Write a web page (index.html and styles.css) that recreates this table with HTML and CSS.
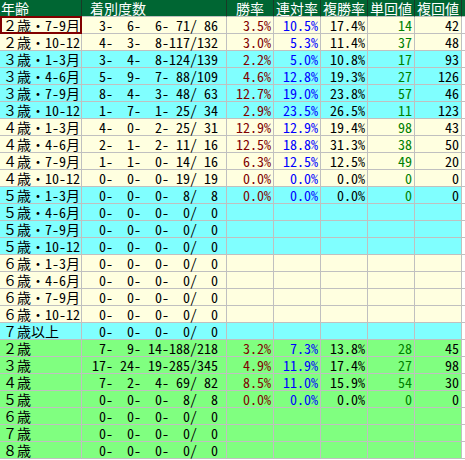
FILE: index.html
```html
<!DOCTYPE html>
<html lang="ja">
<head>
<meta charset="utf-8">
<title>年齢別成績</title>
<link rel="stylesheet" href="styles.css">
</head>
<body>
<table class="stats">
  <thead>
    <tr>
      <th class="c-age">年齢</th>
      <th class="c-rec">着別度数</th>
      <th>勝率</th>
      <th>連対率</th>
      <th>複勝率</th>
      <th>単回値</th>
      <th>複回値</th>
      <th class="c-extra"></th>
    </tr>
  </thead>
  <tbody>
    <tr class="y"><td class="age sel">２歳・7-9月</td><td class="rec">  3-  6-  6- 71/ 86</td><td class="win">3.5%</td><td class="ren">10.5%</td><td class="fuku">17.4%</td><td class="tan">14</td><td class="fk">42</td><td class="ex"></td></tr>
    <tr class="y"><td class="age">２歳・10-12</td><td class="rec">  4-  3-  8-117/132</td><td class="win">3.0%</td><td class="ren">5.3%</td><td class="fuku">11.4%</td><td class="tan">37</td><td class="fk">48</td><td class="ex"></td></tr>
    <tr class="c"><td class="age">３歳・1-3月</td><td class="rec">  3-  4-  8-124/139</td><td class="win">2.2%</td><td class="ren">5.0%</td><td class="fuku">10.8%</td><td class="tan">17</td><td class="fk">93</td><td class="ex"></td></tr>
    <tr class="c"><td class="age">３歳・4-6月</td><td class="rec">  5-  9-  7- 88/109</td><td class="win">4.6%</td><td class="ren">12.8%</td><td class="fuku">19.3%</td><td class="tan">27</td><td class="fk">126</td><td class="ex"></td></tr>
    <tr class="c"><td class="age">３歳・7-9月</td><td class="rec">  8-  4-  3- 48/ 63</td><td class="win">12.7%</td><td class="ren">19.0%</td><td class="fuku">23.8%</td><td class="tan">57</td><td class="fk">46</td><td class="ex"></td></tr>
    <tr class="c"><td class="age">３歳・10-12</td><td class="rec">  1-  7-  1- 25/ 34</td><td class="win">2.9%</td><td class="ren">23.5%</td><td class="fuku">26.5%</td><td class="tan">11</td><td class="fk">123</td><td class="ex"></td></tr>
    <tr class="y"><td class="age">４歳・1-3月</td><td class="rec">  4-  0-  2- 25/ 31</td><td class="win">12.9%</td><td class="ren">12.9%</td><td class="fuku">19.4%</td><td class="tan">98</td><td class="fk">43</td><td class="ex"></td></tr>
    <tr class="y"><td class="age">４歳・4-6月</td><td class="rec">  2-  1-  2- 11/ 16</td><td class="win">12.5%</td><td class="ren">18.8%</td><td class="fuku">31.3%</td><td class="tan">38</td><td class="fk">50</td><td class="ex"></td></tr>
    <tr class="y"><td class="age">４歳・7-9月</td><td class="rec">  1-  1-  0- 14/ 16</td><td class="win">6.3%</td><td class="ren">12.5%</td><td class="fuku">12.5%</td><td class="tan">49</td><td class="fk">20</td><td class="ex"></td></tr>
    <tr class="y"><td class="age">４歳・10-12</td><td class="rec">  0-  0-  0- 19/ 19</td><td class="win">0.0%</td><td class="ren">0.0%</td><td class="fuku">0.0%</td><td class="tan">0</td><td class="fk">0</td><td class="ex"></td></tr>
    <tr class="c"><td class="age">５歳・1-3月</td><td class="rec">  0-  0-  0-  8/  8</td><td class="win">0.0%</td><td class="ren">0.0%</td><td class="fuku">0.0%</td><td class="tan">0</td><td class="fk">0</td><td class="ex"></td></tr>
    <tr class="c"><td class="age">５歳・4-6月</td><td class="rec">  0-  0-  0-  0/  0</td><td></td><td></td><td></td><td></td><td></td><td class="ex"></td></tr>
    <tr class="c"><td class="age">５歳・7-9月</td><td class="rec">  0-  0-  0-  0/  0</td><td></td><td></td><td></td><td></td><td></td><td class="ex"></td></tr>
    <tr class="c"><td class="age">５歳・10-12</td><td class="rec">  0-  0-  0-  0/  0</td><td></td><td></td><td></td><td></td><td></td><td class="ex"></td></tr>
    <tr class="y"><td class="age">６歳・1-3月</td><td class="rec">  0-  0-  0-  0/  0</td><td></td><td></td><td></td><td></td><td></td><td class="ex"></td></tr>
    <tr class="y"><td class="age">６歳・4-6月</td><td class="rec">  0-  0-  0-  0/  0</td><td></td><td></td><td></td><td></td><td></td><td class="ex"></td></tr>
    <tr class="y"><td class="age">６歳・7-9月</td><td class="rec">  0-  0-  0-  0/  0</td><td></td><td></td><td></td><td></td><td></td><td class="ex"></td></tr>
    <tr class="y"><td class="age">６歳・10-12</td><td class="rec">  0-  0-  0-  0/  0</td><td></td><td></td><td></td><td></td><td></td><td class="ex"></td></tr>
    <tr class="c"><td class="age">７歳以上</td><td class="rec">  0-  0-  0-  0/  0</td><td></td><td></td><td></td><td></td><td></td><td class="ex"></td></tr>
    <tr class="g"><td class="age">２歳</td><td class="rec">  7-  9- 14-188/218</td><td class="win">3.2%</td><td class="ren">7.3%</td><td class="fuku">13.8%</td><td class="tan">28</td><td class="fk">45</td><td class="ex"></td></tr>
    <tr class="g"><td class="age">３歳</td><td class="rec"> 17- 24- 19-285/345</td><td class="win">4.9%</td><td class="ren">11.9%</td><td class="fuku">17.4%</td><td class="tan">27</td><td class="fk">98</td><td class="ex"></td></tr>
    <tr class="g"><td class="age">４歳</td><td class="rec">  7-  2-  4- 69/ 82</td><td class="win">8.5%</td><td class="ren">11.0%</td><td class="fuku">15.9%</td><td class="tan">54</td><td class="fk">30</td><td class="ex"></td></tr>
    <tr class="g"><td class="age">５歳</td><td class="rec">  0-  0-  0-  8/  8</td><td class="win">0.0%</td><td class="ren">0.0%</td><td class="fuku">0.0%</td><td class="tan">0</td><td class="fk">0</td><td class="ex"></td></tr>
    <tr class="g"><td class="age">６歳</td><td class="rec">  0-  0-  0-  0/  0</td><td></td><td></td><td></td><td></td><td></td><td class="ex"></td></tr>
    <tr class="g"><td class="age">７歳</td><td class="rec">  0-  0-  0-  0/  0</td><td></td><td></td><td></td><td></td><td></td><td class="ex"></td></tr>
    <tr class="g"><td class="age">８歳</td><td class="rec">  0-  0-  0-  0/  0</td><td></td><td></td><td></td><td></td><td></td><td class="ex"></td></tr>
  </tbody>
</table>
</body>
</html>
```
FILE: styles.css
```css
html, body {
  margin: 0;
  padding: 0;
  background: #ffffff;
}

.stats {
  border-collapse: separate;
  border-spacing: 0;
  table-layout: fixed;
  width: 465px;
  font-family: "Noto Sans Mono CJK JP", "Noto Sans CJK JP", monospace;
  font-size: 14px;
  line-height: 16px;
  color: #000000;
}

.stats th,
.stats td {
  box-sizing: border-box;
  height: 17px;
  padding: 0 2px 0 0;
  border-right: 1px solid #c0c0c0;
  border-bottom: 1px solid #c0c0c0;
  white-space: pre;
  text-align: right;
  font-weight: normal;
  vertical-align: middle;
}

.stats th {
  width: 47px;
  background: #006633;
  color: #ffffff;
  text-align: center;
  padding: 0;
  border-right-color: #1a3a26;
}

.stats th.c-age { width: 82px; text-align: left; padding-left: 1px; }
.stats th.c-rec { width: 145px; text-align: left; padding-left: 8px; }
.stats th.c-extra { width: 3px; border-right: 0; }

.stats td.ex { border-right: 0; padding: 0; }

.stats td.age {
  text-align: left;
  padding-left: 3px;
}

.stats td.rec {
  text-align: left;
  padding-left: 3px;
}

.stats td.sel {
  position: relative;
}

.stats td.sel::after {
  content: "";
  position: absolute;
  left: 0;
  top: -1px;
  width: 82px;
  height: 18px;
  box-sizing: border-box;
  border: 2px solid #800000;
}

.win { color: #800000; }
.ren { color: #0000ff; }
.fuku { color: #000000; }
.tan { color: #008000; }
.fk { color: #000000; }

tr.y td { background: #ffffe0; }
tr.c td { background: #80ffff; }
tr.g td { background: #80ff80; }
tr td.ex { background: #ffffff; }
```
